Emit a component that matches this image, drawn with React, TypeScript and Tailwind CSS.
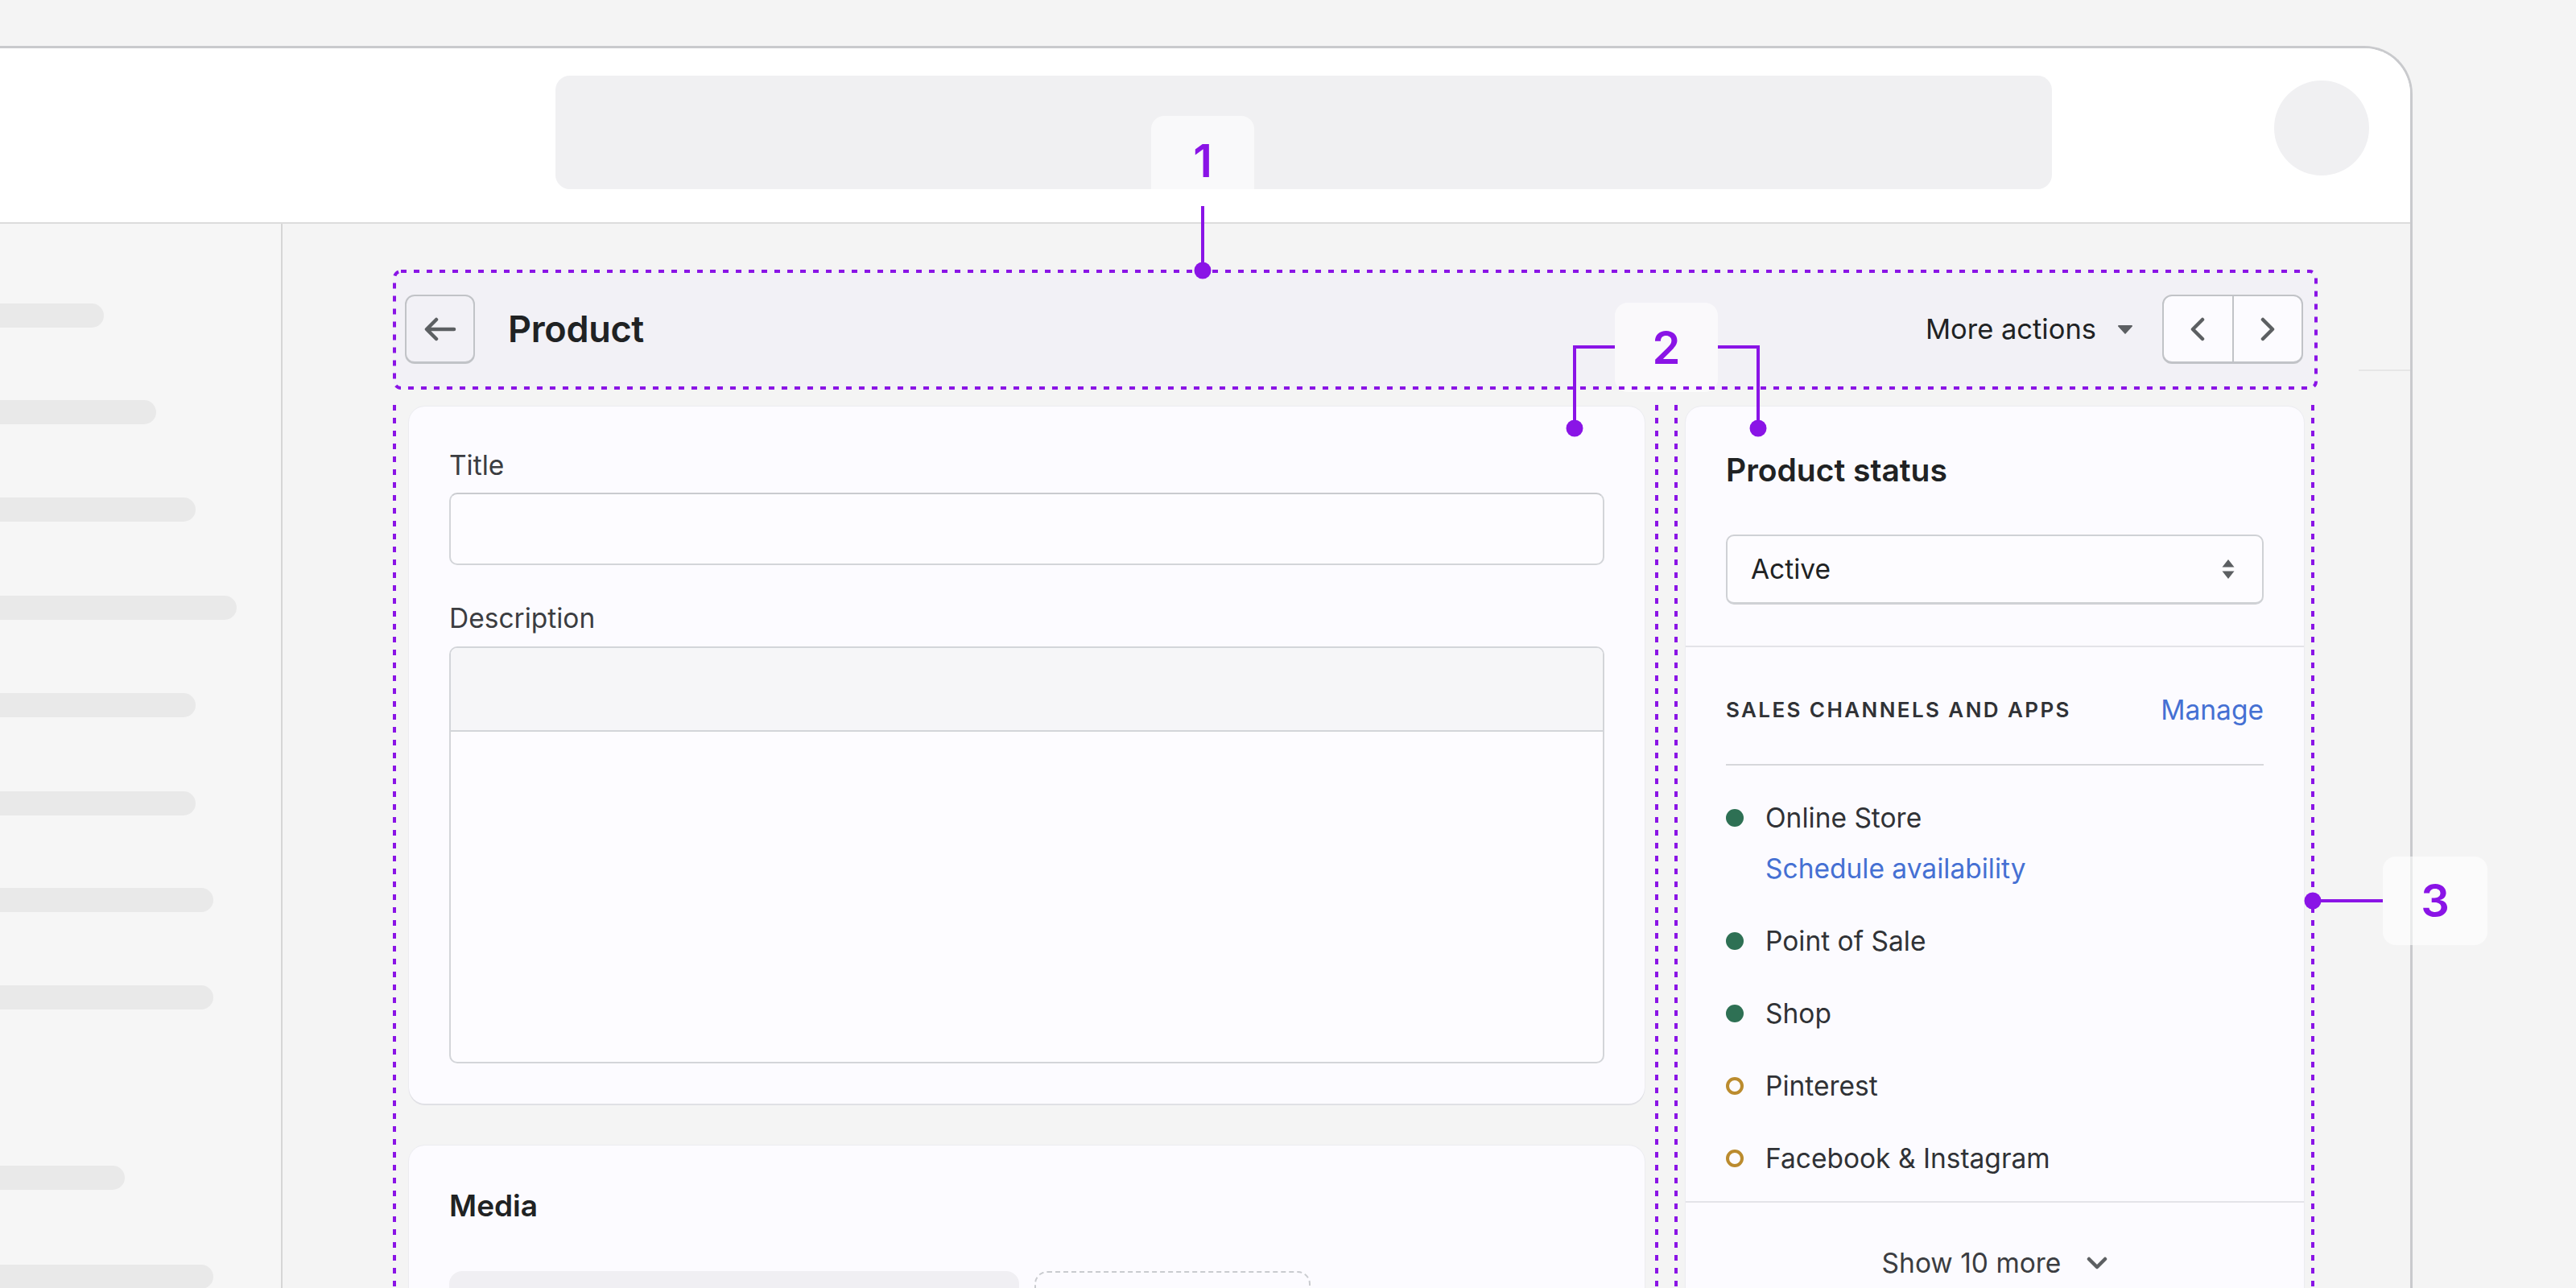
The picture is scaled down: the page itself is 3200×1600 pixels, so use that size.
import React from "react";

const PURPLE = "#8a14e6";

function ArrowLeft() {
  return (
    <svg width="40" height="30" viewBox="0 0 40 30" fill="none" stroke="#5c5f62" strokeWidth="4.5" strokeLinecap="round" strokeLinejoin="round">
      <path d="M37 15H4M15 3L3 15l12 12" />
    </svg>
  );
}

function ChevronLeft() {
  return (
    <svg width="18" height="30" viewBox="0 0 18 30" fill="none" stroke="#5c5f62" strokeWidth="4.5" strokeLinecap="round" strokeLinejoin="round">
      <path d="M15 3L3 15l12 12" />
    </svg>
  );
}

function ChevronRight() {
  return (
    <svg width="18" height="30" viewBox="0 0 18 30" fill="none" stroke="#5c5f62" strokeWidth="4.5" strokeLinecap="round" strokeLinejoin="round">
      <path d="M3 3l12 12L3 27" />
    </svg>
  );
}

function Caret() {
  return (
    <svg width="20" height="12" viewBox="0 0 20 12" fill="#5c5f62">
      <path d="M2 1h16a1 1 0 0 1 .8 1.6l-8 8.6a1 1 0 0 1-1.6 0l-8-8.6A1 1 0 0 1 2 1z" />
    </svg>
  );
}

function SelectArrows() {
  return (
    <svg width="18" height="26" viewBox="0 0 18 26" fill="#5c5f62">
      <path d="M9 1l7.5 9.5h-15z" />
      <path d="M1.5 15.5h15L9 25z" />
    </svg>
  );
}

function ChevronDown() {
  return (
    <svg width="26" height="16" viewBox="0 0 26 16" fill="none" stroke="#5c5f62" strokeWidth="4.5" strokeLinecap="round" strokeLinejoin="round">
      <path d="M3 3l10 10L23 3" />
    </svg>
  );
}

const bars = [
  "mt-[99px] w-[129px]",
  "mt-[90px] w-[194px]",
  "mt-[91px] w-[243px]",
  "mt-[92px] w-[294px]",
  "mt-[91px] w-[243px]",
  "mt-[92px] w-[243px]",
  "mt-[90px] w-[265px]",
  "mt-[91px] w-[265px]",
  "mt-[194px] w-[155px]",
  "mt-[93px] w-[265px]",
];

type Channel = { name: string; active: boolean; sub?: string };
const channels: Channel[] = [
  { name: "Online Store", active: true, sub: "Schedule availability" },
  { name: "Point of Sale", active: true },
  { name: "Shop", active: true },
  { name: "Pinterest", active: false },
  { name: "Facebook & Instagram", active: false },
];

export default function App() {
  return (
    <div className="relative w-[3200px] h-[1600px] overflow-hidden bg-[#f4f4f4] pt-[57px] font-['Inter',sans-serif]">
      {/* Browser window */}
      <div className="w-[2997px] h-[1543px] border-t-[3px] border-r-[3px] border-[#c9cacd] rounded-tr-[60px] overflow-hidden flex flex-col bg-white">
        {/* Top bar */}
        <div className="h-[218px] shrink-0 bg-white border-b-2 border-[#dcdcdc] flex items-start pl-[690px]">
          <div className="mt-[34px] w-[1859px] h-[141px] rounded-[18px] bg-[#f0f0f2]" />
          <div className="mt-[40px] ml-[276px] w-[118px] h-[118px] rounded-full bg-[#f0f0f2]" />
        </div>

        <div className="flex flex-1 min-h-0">
          {/* Sidebar */}
          <div className="w-[351px] shrink-0 bg-[#f6f6f6] border-r-2 border-[#d6d6d6] flex flex-col">
            {bars.map((c, i) => (
              <div key={i} className={`h-[30px] rounded-r-full bg-[#e9e9e9] shrink-0 ${c}`} />
            ))}
          </div>

          {/* Main */}
          <div className="flex-1 flex bg-[#f4f4f4] min-w-0">
            <div className="w-[2390px] ml-[137px] shrink-0 pt-[58px] flex flex-col">
              {/* Page header */}
              <div className="h-[146px] shrink-0 rounded-[8px] bg-[#f2f1f6] flex items-center pl-[15px] pr-[17px]">
                <div className="w-[87px] h-[86px] rounded-[12px] border-2 border-b-[3px] border-[#c1c3c7] flex items-center justify-center">
                  <ArrowLeft />
                </div>
                <div className="ml-[41px] text-[45px] leading-[56px] font-semibold text-[#202223] tracking-[-0.3px]">Product</div>
                <div className="ml-auto text-[34.5px] leading-[40px] text-[#202223]">More actions</div>
                <div className="ml-[26px] flex items-center">
                  <Caret />
                </div>
                <div className="ml-[36px] w-[175px] h-[86px] rounded-[12px] border-2 border-b-[3px] border-[#c1c3c7] bg-[#fcfbff] flex">
                  <div className="flex-1 flex items-center justify-center border-r-2 border-[#c1c3c7]">
                    <ChevronLeft />
                  </div>
                  <div className="flex-1 flex items-center justify-center">
                    <ChevronRight />
                  </div>
                </div>
              </div>

              {/* Columns */}
              <div className="mt-[23px] shrink-0 pl-[20px] flex items-start gap-[51px]">
                {/* Left column */}
                <div className="w-[1535px] shrink-0 flex flex-col gap-[52px]">
                  <div className="shrink-0 rounded-[20px] bg-[#fcfbff] shadow-[0_2px_0_#e0e0e5,0_0_0_1px_#ececf0] px-[50px] pt-[53px] pb-[50px]">
                    <div className="text-[33.5px] leading-[40px] text-[#3b3d41] mb-[14px]">Title</div>
                    <div className="h-[90px] rounded-[10px] border-2 border-[#d3d5d9] border-t-[#c9cbcf] bg-[#fdfcff]" />
                    <div className="mt-[46px] text-[33.5px] leading-[40px] text-[#3b3d41] mb-[15px]">Description</div>
                    <div className="h-[518px] rounded-[10px] border-2 border-[#d3d5d9] overflow-hidden bg-[#fdfcff]">
                      <div className="h-[104px] bg-[#f6f6f8] border-b-2 border-[#d3d5d9]" />
                    </div>
                  </div>

                  <div className="h-[400px] shrink-0 rounded-[20px] bg-[#fcfbff] shadow-[0_2px_0_#e0e0e5,0_0_0_1px_#ececf0] px-[50px] pt-[51px]">
                    <div className="text-[37px] leading-[48px] font-semibold text-[#202223]">Media</div>
                    <div className="mt-[57px] flex gap-[19px]">
                      <div className="w-[708px] h-[200px] rounded-[16px] bg-[#f0eff3]" />
                      <div className="w-[343px] h-[200px] rounded-[16px] border-2 border-dashed border-[#c9cbcf]" />
                    </div>
                  </div>
                </div>

                {/* Right column */}
                <div className="w-[768px] shrink-0">
                  <div className="rounded-[20px] bg-[#fcfbff] shadow-[0_2px_0_#e0e0e5,0_0_0_1px_#ececf0] overflow-hidden">
                    <div className="px-[50px] pt-[55px] pb-[51px] border-b-2 border-[#e3e3e8]">
                      <div className="text-[39px] leading-[48px] font-semibold text-[#202223]">Product status</div>
                      <div className="mt-[56px] h-[87px] rounded-[10px] border-2 border-b-[3px] border-[#cfd1d5] bg-[#fdfcff] flex items-center pl-[29px] pr-[33px]">
                        <span className="text-[33.5px] leading-[40px] text-[#202223]">Active</span>
                        <span className="ml-auto flex items-center">
                          <SelectArrows />
                        </span>
                      </div>
                    </div>

                    <div className="px-[50px] pt-[56px] pb-[31px] border-b-2 border-[#e3e3e8]">
                      <div className="h-[44px] flex items-center justify-between">
                        <span className="text-[26px] leading-[32px] font-semibold tracking-[2.4px] text-[#303236]">SALES CHANNELS AND APPS</span>
                        <span className="text-[33.5px] leading-[40px] text-[#4570d3]">Manage</span>
                      </div>
                      <div className="mt-[45px] h-[2px] bg-[#d6d7db]" />
                      <div className="mt-[43px] flex flex-col gap-[46px]">
                        {channels.map((c) => (
                          <div key={c.name} className="flex items-start">
                            <div className="w-[49px] h-[44px] shrink-0 flex items-center">
                              {c.active ? (
                                <div className="w-[22px] h-[22px] rounded-full bg-[#2e7054]" />
                              ) : (
                                <div className="w-[22px] h-[22px] rounded-full border-[4px] border-[#bb8b2e]" />
                              )}
                            </div>
                            <div className="flex flex-col">
                              <span className="text-[33.5px] leading-[44px] text-[#303236]">{c.name}</span>
                              {c.sub && (
                                <span className="mt-[19px] text-[33.5px] leading-[44px] text-[#4570d3]">{c.sub}</span>
                              )}
                            </div>
                          </div>
                        ))}
                      </div>
                    </div>

                    <div className="pt-[53px] pb-[60px] flex items-center justify-center">
                      <span className="text-[33.5px] leading-[44px] text-[#3b3d41]">Show 10 more</span>
                      <span className="ml-[32px] flex items-center">
                        <ChevronDown />
                      </span>
                    </div>
                  </div>
                </div>
              </div>
            </div>

            {/* right strip */}
            <div className="flex-1 pt-[181px] pl-[52px]">
              <div className="h-[2px] bg-[#e6e6e6]" />
            </div>
          </div>
        </div>
      </div>

      {/* Annotation callout boxes */}
      <div className="absolute left-[1430px] top-[144px] w-[128px] h-[112px] rounded-[16px] bg-white/60 flex items-center justify-center text-[56px] leading-none font-semibold text-[#8a14e6]">1</div>
      <div className="absolute left-[2006px] top-[376px] w-[128px] h-[111px] rounded-[16px] bg-white/60 flex items-center justify-center text-[56px] leading-none font-semibold text-[#8a14e6]">2</div>
      <div className="absolute left-[2960px] top-[1064px] w-[130px] h-[110px] rounded-[16px] bg-white/60 flex items-center justify-center text-[56px] leading-none font-semibold text-[#8a14e6]">3</div>

      {/* Annotation drawing */}
      <svg className="absolute left-0 top-0 pointer-events-none" width="3200" height="1600" viewBox="0 0 3200 1600" fill="none">
        <g stroke={PURPLE} strokeWidth="4" strokeDasharray="7 9">
          <rect x="490" y="337" width="2387" height="145" rx="8" />
          <path d="M490 503V1600" />
          <path d="M2058 503V1600" />
          <path d="M2082 503V1600" />
          <path d="M2873 503V1600" />
        </g>
        <g stroke={PURPLE} strokeWidth="4">
          <path d="M1494 256V336" />
          <path d="M2006 431H1956V532" />
          <path d="M2134 431H2184V532" />
          <path d="M2873 1119H2960" />
        </g>
        <g fill={PURPLE}>
          <circle cx="1494" cy="336" r="10.5" />
          <circle cx="1956" cy="532" r="10.5" />
          <circle cx="2184" cy="532" r="10.5" />
          <circle cx="2873" cy="1119" r="10.5" />
        </g>
      </svg>
    </div>
  );
}
